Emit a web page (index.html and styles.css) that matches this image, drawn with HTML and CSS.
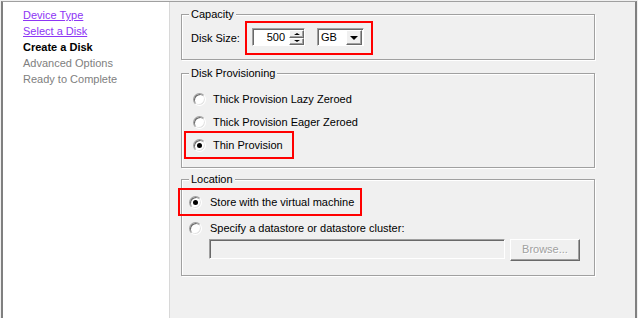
FILE: index.html
```html
<!DOCTYPE html>
<html lang="en">
<head>
    <meta charset="UTF-8">
    <title>Create a Disk</title>
    <link rel="stylesheet" href="styles.css">
</head>
<body>

<div class="window">
    <ul class="steps">
        <li><a href="#">Device Type</a></li>
        <li><a href="#">Select a Disk</a></li>
        <li class="current">Create a Disk</li>
        <li class="pending">Advanced Options</li>
        <li class="pending">Ready to Complete</li>
    </ul>

    <div class="page">
        <div class="group capacity">
            <div class="group-title">Capacity</div>
            <div class="size-row">
                <span class="field-label">Disk Size:</span>
                <div class="mark size-mark">
                    <div class="spinner">
                        <span class="spin-value">500</span>
                        <span class="spin-buttons">
                            <span class="spin-btn"><i class="arrow-up"></i></span>
                            <span class="spin-btn"><i class="arrow-down"></i></span>
                        </span>
                    </div>
                    <div class="combo">
                        <span class="combo-value">GB</span>
                        <span class="combo-btn"><i class="arrow-drop"></i></span>
                    </div>
                </div>
            </div>
        </div>

        <div class="group provisioning">
            <div class="group-title">Disk Provisioning</div>
            <div class="option first"><span class="radio"></span>Thick Provision Lazy Zeroed</div>
            <div class="option second"><span class="radio"></span>Thick Provision Eager Zeroed</div>
            <div class="mark thin-mark">
                <div class="option"><span class="radio checked"></span>Thin Provision</div>
            </div>
        </div>

        <div class="group location">
            <div class="group-title">Location</div>
            <div class="mark store-mark">
                <div class="option"><span class="radio checked"></span>Store with the virtual machine</div>
            </div>
            <div class="option datastore"><span class="radio"></span>Specify a datastore or datastore cluster:</div>
            <div class="browse-row">
                <div class="path-field"></div>
                <div class="button disabled">Browse...</div>
            </div>
        </div>
    </div>
</div>

</body>
</html>
```

FILE: styles.css
```css
* {
    box-sizing: border-box;
}

body {
    margin: 0;
    background-color: #f0f0f0;
    font-family: "Liberation Sans", Arial, sans-serif;
    font-size: 11px;
    color: #000;
}

.window {
    display: flex;
    width: 636px;
    height: 330px;
    margin: 1px 0 0 1px;
    border-top: 1px solid #a0a0a0;
    border-left: 2px solid #808080;
    border-right: 2px solid #808080;
}

/* left wizard steps */
.steps {
    width: 167px;
    margin: 0;
    padding: 5px 0 0 20px;
    list-style: none;
    background: #fff;
    border-right: 1px solid #d8d8d8;
}

.steps li {
    line-height: 16px;
    white-space: nowrap;
}

.steps a {
    color: #8d35f5;
}

.steps .current {
    font-weight: bold;
}

.steps .pending {
    color: #808080;
}

/* right page */
.page {
    flex: 1;
    padding: 12px 0 0 11px;
}

.group {
    width: 414px;
    border: 1px solid #a0a0a0;
    box-shadow: inset 1px 1px 0 #fff, 1px 1px 0 #fff;
}

.group-title {
    width: fit-content;
    margin: -8px 0 0 7px;
    padding: 0 2px;
    line-height: 14px;
    background: #f0f0f0;
}

.capacity {
    height: 46px;
}

.provisioning {
    height: 95px;
    margin-top: 13px;
}

.location {
    height: 97px;
    margin-top: 11px;
}

/* red annotation boxes */
.mark {
    border: 2px solid #ff0000;
}

.size-row {
    display: flex;
    align-items: center;
    padding-left: 9px;
}

.field-label {
    width: 54px;
}

.size-mark {
    display: flex;
    gap: 12px;
    width: 128px;
    padding: 5px 0 7px 5px;
}

.spinner,
.combo,
.path-field {
    display: flex;
    height: 18px;
    background: #fff;
    border: 1px solid;
    border-color: #a0a0a0 #fff #fff #a0a0a0;
    box-shadow: inset 1px 1px 0 #696969;
}

.spinner {
    width: 53px;
}

.spin-value {
    flex: 1;
    padding: 2px 4px 0 0;
    text-align: right;
}

.spin-buttons {
    display: flex;
    flex-direction: column;
    width: 15px;
    padding-top: 1px;
}

.spin-btn,
.combo-btn {
    display: flex;
    align-items: center;
    justify-content: center;
    background: #f0f0f0;
    border: 1px solid;
    border-color: #fff #696969 #696969 #fff;
    box-shadow: inset -1px -1px 0 #a0a0a0;
}

.spin-btn {
    height: 8px;
}

.arrow-up,
.arrow-down,
.arrow-drop {
    width: 0;
    height: 0;
    border-left: 3px solid transparent;
    border-right: 3px solid transparent;
}

.arrow-up {
    border-bottom: 2px solid #000;
}

.arrow-down {
    border-top: 2px solid #000;
}

.combo {
    width: 47px;
}

.combo-value {
    flex: 1;
    padding: 2px 0 0 3px;
}

.combo-btn {
    width: 16px;
    margin: 1px 1px 0 0;
    height: 15px;
}

.arrow-drop {
    border-left-width: 4px;
    border-right-width: 4px;
    border-top: 4px solid #000;
}

/* radio options */
.option {
    display: flex;
    align-items: center;
    height: 16px;
    white-space: nowrap;
}

.radio {
    position: relative;
    width: 13px;
    height: 13px;
    margin-right: 7px;
    border-radius: 50%;
    background: #fff;
    border: 1px solid;
    border-color: #a0a0a0 #fff #fff #a0a0a0;
    box-shadow: inset 1px 1px 0 #696969, inset -1px -1px 0 #e3e3e3;
}

.radio.checked::after {
    content: "";
    position: absolute;
    left: 3px;
    top: 3px;
    width: 5px;
    height: 5px;
    border-radius: 50%;
    background: #000;
}

.provisioning .first {
    margin-top: 11px;
    padding-left: 11px;
}

.provisioning .second {
    margin-top: 7px;
    padding-left: 11px;
}

.thin-mark {
    width: 110px;
    margin: 1px 0 0 2px;
    padding: 4px 0 4px 7px;
}

.store-mark {
    width: 184px;
    margin: 2px 0 0 -4px;
    padding: 4px 0 4px 9px;
}

.location .radio {
    margin-right: 8px;
}

.datastore {
    margin-top: 4px;
    padding-left: 7px;
}

.browse-row {
    display: flex;
    align-items: flex-start;
    gap: 5px;
    margin-top: 3px;
    padding-left: 27px;
}

.path-field {
    width: 296px;
    height: 20px;
    background: #f0f0f0;
}

.button {
    width: 70px;
    height: 22px;
    line-height: 19px;
    text-align: center;
    background: #f0f0f0;
    border: 1px solid;
    border-color: #fff #696969 #696969 #fff;
    box-shadow: inset -1px -1px 0 #a0a0a0;
}

.button.disabled {
    color: #a0a0a0;
    text-shadow: 1px 1px 0 #fff;
}
```
